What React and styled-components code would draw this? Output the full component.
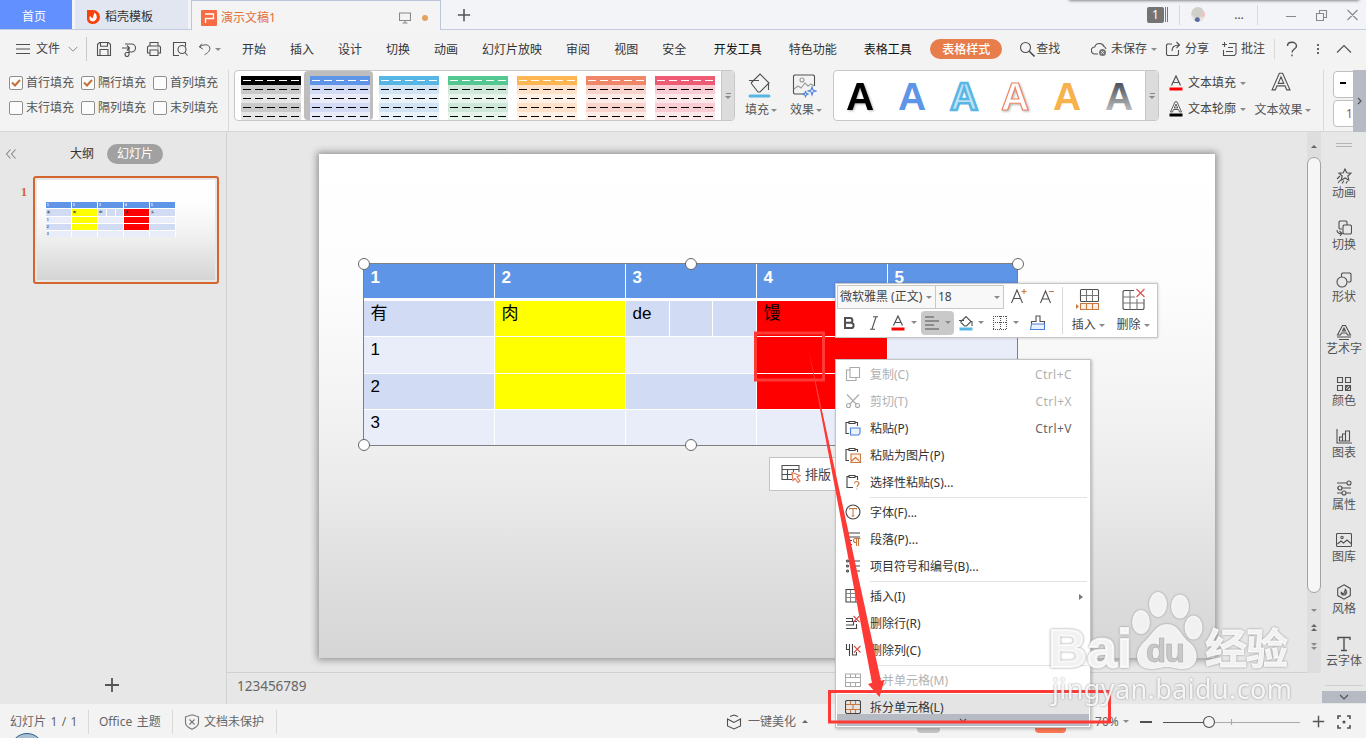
import React from "react";
import styled, { createGlobalStyle, css } from "styled-components";

const GlobalStyle = createGlobalStyle`
  * { box-sizing: border-box; }
  body {
    margin: 0;
    overflow: hidden;
    font-family: "Noto Sans", "Noto Sans CJK SC", sans-serif;
    font-size: 12px;
    line-height: 16px;
    color: #444;
  }
`;

const App_ = styled.div`
  position: relative;
  display: flex;
  flex-direction: column;
  width: 1366px;
  height: 738px;
  overflow: hidden;
  background: #f3f3f3;
  white-space: nowrap;
`;

/* shared parts */

const Svg = styled.svg`
  display: block;
  flex: none;
  fill: none;
  stroke: ${(p) => p.$color || "#505050"};
  stroke-width: ${(p) => p.$line || 1.1};
`;

const Slot = styled.div`
  display: flex;
  flex: none;
  align-items: center;
  justify-content: ${(p) => (p.$start ? "flex-start" : "center")};
  width: ${(p) => p.$w}px;
`;

const Caret = styled.i`
  flex: none;
  width: 0;
  height: 0;
  margin-left: ${(p) => p.$gap ?? 6}px;
  border: 3px solid transparent;
  border-bottom-width: 0;
  border-top-color: #8a8a8a;
  ${(p) =>
    p.$up &&
    css`
      border-bottom: 3px solid #666;
      border-top-width: 0;
    `}
`;

const Rule = styled.span`
  flex: none;
  width: 1px;
  height: ${(p) => p.$h || 24}px;
  background: ${(p) => p.$color || "#d9d9d9"};
`;

const Spacer = styled.div`
  flex: ${(p) => (p.$w ? `0 0 ${p.$w}px` : "1")};
`;

/* window tabs */

const TabBar = styled.div`
  display: flex;
  align-items: stretch;
  flex: none;
  height: 30px;
  background: #f2f4f8;
  border-bottom: 1px solid #c3cbe0;
`;

const HomeTab = styled.div`
  display: flex;
  align-items: center;
  justify-content: center;
  width: 72px;
  padding: 5px 4px 0 0;
  margin-right: 3px;
  color: #fff;
  background: #6390ff;
`;

const TemplateTab = styled.div`
  display: flex;
  align-items: center;
  gap: 5px;
  width: 113px;
  padding: 5px 0 0 12px;
  margin-right: 3px;
  color: #333;
  background: #e1e6f0;
`;

const ActiveTab = styled.div`
  display: flex;
  align-items: center;
  width: 250px;
  height: 30px;
  padding: 4px 0 0 9px;
  color: #e2703a;
  background: #f4f4f4;
  border: 1px solid #bdc5da;
  border-bottom: 0;
`;

const Dot = styled.span`
  width: 6px;
  height: 6px;
  border-radius: 50%;
  background: #e5a062;
  margin: 0 12px 0 11px;
`;

const Badge = styled.span`
  width: 17px;
  height: 16px;
  border-radius: 2px;
  background: #747474;
  color: #fff;
  text-align: center;
`;

const Avatar = styled.span`
  width: 14px;
  height: 15px;
  border-radius: 50%;
  background: radial-gradient(circle at 45% 85%, #5a6da0 0 2px, transparent 3px),
    radial-gradient(circle at 90% 50%, #f3c0c4 0 2px, transparent 3px),
    radial-gradient(circle at 45% 35%, #cfd0c8 0 5px, #ebe2e0 7px);
`;

const TopShadow = styled.div`
  position: absolute;
  top: -7px;
  left: 1070px;
  width: 288px;
  height: 7px;
  background: #999;
  box-shadow: 0 0 3px 1px #888;
`;

/* menu */

const MenuRow = styled.div`
  display: flex;
  align-items: center;
  flex: none;
  height: 37px;
  padding-top: 1px;
`;

const MenuItem = styled.span`
  padding: 2px ${(p) => (p.$wide ? 13.5 : 12)}px 0;
  color: ${(p) => (p.$strong ? "#111" : "#333")};
`;

const MenuPill = styled.span`
  width: 72px;
  height: 20px;
  margin: 0 17px 0 4px;
  border-radius: 10px;
  line-height: 21px;
  text-align: center;
  font-weight: 500;
  color: #fff;
  background: #e77d4b;
`;

/* ribbon */

const Ribbon = styled.div`
  display: flex;
  flex: none;
  height: 65px;
  padding-top: 3px;
  border-bottom: 1px solid #d6d6d6;
`;

const Checks = styled.div`
  display: grid;
  grid-template-columns: repeat(3, 72px);
  grid-template-rows: 25px 26px;
  width: 228px;
  padding-left: 9px;
`;

const Check = styled.label`
  display: flex;
  align-items: center;
  gap: 3px;
  color: #555;
`;

const Box = styled.span`
  width: 14px;
  height: 14px;
  border: 1px solid #8f8f8f;
  border-radius: 2px;
  background: #fbfbfb;
`;

const Gallery = styled.div`
  display: flex;
  flex: none;
  width: ${(p) => p.$w}px;
  height: 51px;
  border: 1px solid #c8c8c8;
  border-radius: 4px;
  background: #fff;
  overflow: hidden;
`;

const GalleryItem = styled.div`
  flex: none;
  width: 69px;
  padding: 5px 3px 0 6px;
  ${(p) =>
    p.$selected &&
    css`
      background: #bdbdbd;
      border-radius: 4px;
    `}
`;

const Stripe = styled.div`
  width: 60px;
  height: 9px;
  background: repeating-linear-gradient(
        to right,
        transparent 0 2px,
        ${(p) => p.$dash} 2px 10px,
        transparent 10px 12px
      )
      0 4px / 100% 1px no-repeat
    ${(p) => p.$bg};
`;

const GalleryMore = styled.div`
  display: flex;
  flex-direction: column;
  align-items: center;
  justify-content: center;
  gap: 2px;
  width: 13px;
  margin-left: auto;
  background: #dcdcdc;
  border-left: 1px solid #c8c8c8;
  &::before {
    content: "";
    width: 5px;
    height: 1px;
    background: #888;
  }
`;

const Art = styled.div`
  display: flex;
  align-items: center;
  justify-content: center;
  width: 52px;
`;

const BigButton = styled.div`
  display: flex;
  flex-direction: column;
  align-items: center;
  width: ${(p) => p.$w}px;
  gap: 4px;
  padding-top: 2px;
  color: #555;
  > svg { margin-left: -3px; }
`;

const BigLabel = styled.span`
  display: flex;
  align-items: center;
  padding-left: 1px;
`;

const SmallStack = styled.div`
  display: grid;
  grid-template-rows: 26px 26px;
  width: 82px;
  padding-left: 10px;
`;

const SmallButton = styled.div`
  display: flex;
  align-items: center;
  gap: 5px;
  color: #444;
`;

const Fields = styled.div`
  display: flex;
  flex-direction: column;
  gap: 2px;
  width: 20px;
  margin-left: 9px;
  padding-top: 1px;
  overflow: hidden;
`;

const Field = styled.div`
  width: 60px;
  height: 27px;
  padding: 5px 0 0 ${(p) => p.$pad}px;
  font-size: 12px;
  color: #9a5c38;
  border: 1px solid #bfbfbf;
  border-radius: 4px;
  background: #fff;
`;

const Expand = styled.div`
  display: flex;
  align-items: center;
  justify-content: center;
  width: 13px;
  height: 62px;
  background: #b5bac3;
`;

/* body */

const Body = styled.div`
  display: flex;
  flex: 1;
  min-height: 0;
  background: #e7e7e7;
`;

const Outline = styled.aside`
  display: flex;
  flex-direction: column;
  width: 227px;
  border-right: 1px solid #d2d2d2;
`;

const OutlineHead = styled.div`
  display: flex;
  align-items: center;
  height: 42px;
  padding: 1px 0 0 6px;
  color: #333;
`;

const OutlinePill = styled.span`
  width: 56px;
  height: 20px;
  margin-left: 13px;
  border-radius: 10px;
  line-height: 20px;
  text-align: center;
  color: #fff;
  background: #a1a1a1;
`;

const ThumbRow = styled.div`
  display: flex;
  flex: 1;
  align-items: flex-start;
  padding: 2px 0 0 20px;
`;

const ThumbNo = styled.b`
  width: 13px;
  padding-top: 8px;
  font: bold 12px/16px "Liberation Serif", serif;
  color: #d2622a;
  text-indent: 1px;
`;

const Thumb = styled.div`
  width: 186px;
  height: 108px;
  padding: 2px;
  border: 2px solid #d2662d;
  border-radius: 3px;
`;

const ThumbPage = styled.div`
  height: 100%;
  padding: 22px 0 0 9px;
  background: linear-gradient(#fff 0, #fdfdfd 25%, #f3f3f3 50%, #ebebeb 65%, #dedede 85%, #d5d5d5);
`;

const MiniTable = styled.div`
  display: grid;
  grid-template-columns: repeat(5, 25px);
  grid-template-rows: 6px 7px 6px 6px 6px;
  gap: 1px;
  width: 130px;
  background: #fff;
  font: bold 3px/4px "Liberation Sans", sans-serif;
`;

const MiniCell = styled.div`
  display: flex;
  gap: 1px;
  padding: 1px 0 0 1px;
  overflow: hidden;
  color: ${(p) => (p.$head ? "#fff" : "#333")};
  background: ${(p) => p.$bg};
`;

const MiniBar = styled.span`
  width: 1px;
  height: 7px;
  margin: -1px 0 0 ${(p) => p.$gap}px;
  background: #fff;
`;

const AddSlide = styled.div`
  height: 39px;
  padding: 12px 0 0 104px;
`;

const Stage = styled.main`
  display: flex;
  flex-direction: column;
  width: 1080px;
`;

const Canvas = styled.div`
  flex: 1;
  padding: 22px 0 0 92px;
  overflow: hidden;
  border-bottom: 1px solid #d0d0d0;
`;

const Slide = styled.div`
  width: 896px;
  height: 504px;
  padding: 110px 0 0 45px;
  background: linear-gradient(#fff 0, #fdfdfd 25%, #f3f3f3 50%, #ebebeb 65%, #dedede 85%, #d5d5d5);
  box-shadow: 0 0 7px 2px rgba(0, 0, 0, 0.36);
`;

const Frame = styled.div`
  position: relative;
  width: 653px;
  box-shadow: 0 0 0 1px #7f7f7f;
  background: #fff;
`;

const Row = styled.div`
  display: grid;
  grid-template-columns: repeat(4, 130px) 129px;
  column-gap: 1px;
  height: ${(p) => p.$h}px;
  margin-bottom: ${(p) => p.$gap ?? 1}px;
`;

const Cell = styled.div`
  display: flex;
  min-width: 0;
  padding-left: 6.5px;
  font: ${(p) => (p.$head ? "bold" : "normal")} 17px/${(p) => (p.$head ? 28 : 26)}px "Liberation Sans", "Noto Sans CJK SC", sans-serif;
  color: ${(p) => (p.$head ? "#fff" : "#000")};
  background: ${(p) => p.$bg};
`;

const SplitCell = styled.div`
  display: grid;
  grid-template-columns: 43px 42px 43px;
  gap: 1px;
`;

const Handle = styled.i`
  position: absolute;
  left: ${(p) => p.$x}px;
  top: ${(p) => p.$y}px;
  width: 12px;
  height: 12px;
  margin: -6.5px 0 0 -6.5px;
  border: 1px solid #666;
  border-radius: 50%;
  background: #fff;
`;

const LayoutButton = styled.div`
  display: flex;
  align-items: center;
  gap: 3px;
  width: 90px;
  height: 34px;
  margin: 12px 0 0 405px;
  padding-left: 11px;
  font-size: 13px;
  border: 1px solid #c3c3c3;
  background: #fff;
`;

const Notes = styled.div`
  height: 31px;
  padding: 5px 0 0 10px;
  font-size: 13.5px;
  color: #666;
`;

const ScrollBar = styled.div`
  display: flex;
  flex-direction: column;
  align-items: center;
  width: 14px;
  height: 541px;
  padding-top: 13px;
  background: #dedede;
`;

const ScrollThumb = styled.div`
  width: 14px;
  height: 436px;
  margin: 9px 0 16px;
  border: 1px solid #a3a3a3;
  border-radius: 7px;
  background: #f6f6f6;
`;

const Side = styled.aside`
  display: flex;
  flex-direction: column;
  align-items: center;
  width: 45px;
  padding: 11px 0 0 1px;
`;

const Grip = styled.div`
  width: 16px;
  height: 4px;
  margin-bottom: 19px;
  border: solid #b5b5b5;
  border-width: 1px 0;
`;

const SideItem = styled.div`
  display: flex;
  flex-direction: column;
  align-items: center;
  gap: 1px;
  height: 52px;
  padding-top: 2px;
  color: #555;
`;

const SideFoot = styled.div`
  display: flex;
  align-items: center;
  justify-content: center;
  width: 44px;
  height: 12px;
  margin: auto 0 1px;
  background: #b5bac3;
`;

const SideRule = styled.div`
  width: 38px;
  height: 1px;
  margin-top: -1px;
  background: #cfcfcf;
`;

/* status bar */

const Status = styled.footer`
  display: flex;
  align-items: center;
  flex: none;
  height: 34px;
  padding: 1px 0 0 10px;
  color: #666;
  background: #f3f3f3;
`;

const StatusText = styled.span`
  flex: none;
  width: ${(p) => p.$w}px;
  word-spacing: 1.3px;
`;

const ViewButton = styled.span`
  width: ${(p) => p.$w}px;
  height: 22px;
  border-radius: 4px;
  background: ${(p) => p.$bg};
`;

const Orb = styled.div`
  position: absolute;
  left: 10px;
  top: 733px;
  width: 34px;
  height: 34px;
  border: 1px solid #2d5f92;
  border-radius: 50%;
  background: #a9bfd2;
`;

/* floating format bar */

const FormatBar = styled.div`
  position: absolute;
  left: 835px;
  top: 283px;
  display: flex;
  width: 323px;
  height: 55px;
  padding: 1px;
  border: 1px solid #c6c6c6;
  background: #fff;
  box-shadow: 0 0 3px rgba(0, 0, 0, 0.2);
`;

const FormatLines = styled.div`
  display: flex;
  flex-direction: column;
  width: 225px;
`;

const FormatLine = styled.div`
  display: flex;
  align-items: center;
  height: ${(p) => p.$h}px;
`;

const Combo = styled.div`
  display: flex;
  align-items: center;
  justify-content: space-between;
  width: ${(p) => p.$w}px;
  height: 24px;
  padding: 0 3px 0 2px;
  margin-right: -1px;
  border: 1px solid #c8c8c8;
  background: #f8f8f8;
`;

const AlignButton = styled.div`
  display: flex;
  align-items: center;
  width: 33px;
  height: 24px;
  padding-left: 4px;
  border-radius: 4px;
  background: #c9c9c9;
`;

const FormatBig = styled.div`
  display: flex;
  flex-direction: column;
  align-items: center;
  width: 45px;
  padding-top: 3px;
  gap: 6px;
`;

const FormatLabel = styled.span`
  display: flex;
  align-items: center;
  margin-left: -1px;
`;

/* context menu */

const ContextMenu = styled.div`
  position: absolute;
  left: 835px;
  top: 359px;
  width: 256px;
  height: 369px;
  padding: 1px;
  border: 1px solid #c4c4c4;
  background: #fff;
  box-shadow: 1px 1px 3px rgba(0, 0, 0, 0.25);
`;

const ContextItem = styled.div`
  display: flex;
  align-items: center;
  gap: 9px;
  height: 27px;
  padding: 1px 17px 0 8px;
  color: ${(p) => (p.$off ? "#b1b1b1" : "#333")};
  background: ${(p) => (p.$active ? "#e4e4e4" : "transparent")};
  > svg { margin-top: -2px; }
`;

const Shortcut = styled.span`
  margin-left: auto;
  letter-spacing: 0.45px;
  color: ${(p) => (p.$off ? "#b1b1b1" : "#666")};
`;

const SubArrow = styled.i`
  margin: 0 -11px 0 auto;
  border: 3px solid transparent;
  border-left: 4px solid #777;
  border-right-width: 0;
`;

const ContextRule = styled.div`
  height: 1px;
  margin: 1px 2px 1px 33px;
  background: #e3e3e3;
`;

const ContextMore = styled.div`
  position: relative;
  display: flex;
  justify-content: center;
  height: 12px;
  margin-top: -7px;
  background: #b5bac3;
`;

const Overlay = styled.svg`
  position: absolute;
  left: 0;
  top: 0;
  pointer-events: none;
`;

const Mark = styled(Overlay)`
  filter: drop-shadow(0 0 1px #888);
`;

/* icons, keyed by name; each is drawn on a 16px box */
const icons = {
  burger: <path d="M1 3.5h14M1 8h14M1 12.5h14" />,
  save: <path d="M1.5 3.5l2-2h9l2 2v11h-13zM4.5 1.8v3.4h7V2M4 14.5v-6h8v6" />,
  export: <path d="M4 3h6.500a4 4 0 0 1 0 8H8M1 7h7.500M6 4.500L8.500 7 6 9.500M8 8v5.500a2 2 0 1 1-2-2h2" />,
  print: <path d="M4 5V1.500h8V5M4 12H1.500V6l1-1h11l1 1v6H12M4 9h8v5.500H4zM11.500 7h1" />,
  undo: <path d="M4.500 2L1.500 5.500 5.500 8M1.800 5.500C6 2.500 13 2 13.500 7c.3 3.500-3 6-6 7.500" />,
  search: <g><circle cx="6.500" cy="6.500" r="5" /><path d="M10 10l5.500 5.500" strokeWidth="1.600" /></g>,
  cloud: <g><path d="M7 13H4a3.500 3.500 0 0 1-.3-7A5 5 0 0 1 13 5.500a3.500 3.500 0 0 1 2 2.500" /><circle cx="11.500" cy="11.500" r="3.500" fill="#777" stroke="none" /><path d="M10.300 10.300l2.400 2.400M12.700 10.300l-2.400 2.400" stroke="#fff" strokeWidth=".9" /></g>,
  share: <path d="M7 3H2.500l-1 1v9.500l1 1h10l1-1V9M7 10c0-4 2-6 7.500-6M11.500 1l3 3-3 3" />,
  comment: <path d="M8 2.500h7v10l-1.500 2h-11V9M1 3.500h5M3.500 1v5M7 6.500h5M5 10.500h7" />,
  animate: <path d="M9 1l1.700 3.800 4.300.4-3.200 2.800 1 4.200L9 10l-3.800 2.200 1-4.200L3 5.200l4.300-.4zM4 8l-3 3M4.500 12L2 15M8 12.500L6 15.500M11.500 13L10 15.500" />,
  swap: <path d="M11 5V2l-1-1H4L3 2v6l1 1h2M7 6l1-1h6.500l1 1v7l-1 1H8l-1-1zM1 10c0 3 2 4 5 3.500M3.500 11l2.500 2.500L4 16" />,
  shapes: <g><path d="M5.500 5V2l1-1H14l1 1v7l-1 1h-2.500" /><circle cx="6" cy="10" r="5" /></g>,
  wordart: <g><path d="M1.500 11L6.500 1.500h3l5 9.500h-3l-1-2h-5l-1 2zM6.500 7L8 4l1.500 3z" /><path d="M1 13h14M3 15.500h10" /></g>,
  palette: <path d="M1.500 1.500h5v5h-5zM9.500 1.500h5v5h-5zM1.500 9.500h5v5h-5zM9.500 9.500h5v5h-5zM10 14.500l4.500-4.500M9.500 12l2.500-2.500" />,
  chart: <path d="M1 1v14h15M3.500 13V9h3v4zM6.500 13V6h3v7M9.500 13V3h4v10zM3.500 13h10" />,
  sliders: <g><path d="M1 3h10M5.500 8H15M1 8h1M1 13h5M10 13h5" /><circle cx="13" cy="3" r="2" /><circle cx="4" cy="8" r="2" /><circle cx="8" cy="13" r="2" /></g>,
  image: <g><rect x=".5" y="1.500" width="15" height="13" rx="1" /><circle cx="6" cy="5.500" r="1.200" /><path d="M1.500 12L5 9l2.500 2L11 8l4 3.500" /></g>,
  style: <g><path d="M8 .8l6.300 3.600v7.200L8 15.200l-6.300-3.600V4.400z" /><path d="M8 12C4 11.500 4 8.500 5 7l2.300 2L9 4c3 2 3.500 7-1 8zM7.500 11.500L10 7" fill="#4c4c4c" stroke="#e7e7e7" strokeWidth=".5" /></g>,
  type: <path d="M2 4V1.500h12V4M8 1.500v13M5 14.500h6" strokeWidth="1.400" />,
  shield: <path d="M8 .8l6.500 2v6C14.500 12 11 14 8 15.300 5 14 1.500 12 1.500 8.800v-6zM5.500 5.500l5 5M10.500 5.500l-5 5" />,
  cube: <path d="M4 2.500L8 1l4 1.500M1.500 5v7L8 15l6.500-3V5L8 8.500zM1.500 5L8 8.500" />,
  fullscreen: <g><path d="M2 5V2h3M11 2h3v3M14 11v3h-3M5 14H2v-3" strokeWidth="1.600" /><circle cx="8" cy="8" r="1" fill="#444" /></g>,
  copy: <path d="M5 1.500h9.500v10H5zM5 4H1.500v10.500H11v-3" />,
  cut: <g><path d="M2 1.500l9.500 10M14 1.500L4.500 11.500" /><circle cx="3.500" cy="12.500" r="2" /><circle cx="12.500" cy="12.500" r="2" /></g>,
  paste: <g><path d="M4 13.500H1v-11h3M10 2.500h2.500V6M4 1.500h6v2H4z" /><path d="M5.500 8h9.500v5l-1.500 2h-8z" stroke="#4a80d8" fill="#eaf2fd" /></g>,
  pasteImage: <g><path d="M4 13.500H1v-11h3M10 2.500h2.500V5M4 1.500h6v2H4z" /><path d="M6 7h9.500v8.500H6zM6 14.500l4.500-4 4.500 4" stroke="#c9783f" fill="#fdf0e6" /></g>,
  pasteSpecial: <g><path d="M8 13.500H2v-11h2M10 2.500h2.500V6M4 1.500h6v2H4z" /><path d="M9.500 9.500c0-3 4.500-2.500 4.500 0 0 1.500-2 1.500-2 3.500M12 14.500v1" stroke="#c9783f" /></g>,
  font: <g><circle cx="8" cy="8" r="7" /><path d="M4.500 5.500V4.500h7v1M8 4.500v7.500M6.500 12h3" stroke="#c9783f" /></g>,
  paragraph: <g><path d="M3 2h12M3 6h12M3 9.500h4M1 13.500h6" /><path d="M15.500 7.500h-5a2 2 0 0 0 0 4h1M11.500 7.500V15M13.500 7.500V15" stroke="#c9783f" /></g>,
  bullets: <g><path d="M6 3h9M6 8h9M6 13h9" /><circle cx="2.500" cy="3" r="1" /><circle cx="2.500" cy="8" r="1" /><circle cx="2.500" cy="13" r="1" /></g>,
  grid: <g><path d="M1.500 5.500h13M1.500 9.500h13M5.500 1.500V14M10.500 1.500V14" stroke="#888" /><path d="M1 1.500h14v12.500H1z" /></g>,
  delRow: <g><path d="M1 3.500h6.500v3H1M1 10h7.500V6.500H12M1 13.500h10.500V9" /><path d="M8.500 1l6 6M14.500 1l-6 6" stroke="#d94f4f" /></g>,
  delCol: <g><path d="M1.500 2v5.500H4.500V2M4.500 7.500V14M7.500 2v11h4V10" /><path d="M9 4l6.500 6.500M15.500 4L9 10.500" stroke="#d94f4f" /></g>,
  merge: <path d="M.5 2h15v12.500H.5zM.5 5.500h15M.5 10.500h15M5.500 2v3.500M10.500 2v3.500M5.500 10.500v4M10.500 10.500v4" />,
  split: <g><path d="M5.500 2v3.500M10.500 2v3.500M1 5.500h14M1 10.500h14M8 5.500v5M5.500 10.500v4M10.500 10.500v4" stroke="#c9783f" /><path d="M.5 5V2.500l1-1h13l1 1V5M.5 11v2.500l1 1h13l1-1V11M.5 5v6M15.500 5v6" /></g>,
  chevron: <path d="M3 5.500L8 10.500l5-5" />,
  up: <path d="M1 11.500l7-7 7 7" />,
  plus: <path d="M8 1v14M1 8h14" strokeWidth="1.800" />,
};

const Icon = ({ name, size = 16, color, line }) => (
  <Svg viewBox="0 0 16 16" width={size} height={size} $color={color} $line={line}>
    {icons[name]}
  </Svg>
);

const Preview = () => (
  <Svg width="16" height="16" viewBox="0 0 16 16">
    <path d="M7 14.500H1.500v-13h12v4" />
    <circle cx="10" cy="8.500" r="4" />
    <path d="M13 11.500l2.500 3" />
  </Svg>
);

const Bucket = () => (
  <Svg width="26" height="26" viewBox="0 0 26 26">
    <path d="M3 8.500h10M5 11L14 2l9 9-9 9h-2l-7-9M22.500 10v8" />
    <path d="M4 24h19" stroke="#58b6e4" strokeWidth="3" strokeLinecap="round" />
  </Svg>
);

const SmallBucket = () => (
  <Svg width="16" height="16" viewBox="0 0 16 16">
    <path d="M1 5.500h5M2.500 7L8 1.500 13 6.500l-4.500 4.500h-2L2.500 7M14 6v5" />
    <path d="M1.500 14h13" stroke="#58b6e4" strokeWidth="3" />
  </Svg>
);

const EffectIcon = () => (
  <Svg width="26" height="26" viewBox="0 0 26 26">
    <path d="M13 22H3.500l-1-1V4l1-1h19l1 1v10" />
    <g stroke="#999">
      <circle cx="11" cy="8" r="2" />
      <path d="M3 17l4-3 3 2 4-5 3 3 3-2 3 2" />
    </g>
    <path d="M21 15l1 3 3 1-3 1-1 3-1-3-3-1 3-1zM14.500 19.500l.8 1.800 1.800.8-1.800.8-.8 1.800-.8-1.800-1.800-.8 1.800-.8z" stroke="#4f83dc" />
  </Svg>
);

const LetterA = ({ bar, outline, size = 14, line = 0.9 }) => (
  <Svg width={size} height={size + 2} viewBox="0 0 14 16" $line={outline ? line : 1.2}>
    {outline ? (
      <path d="M1.500 11L6 .8h2L12.500 11h-2L9.500 8.500h-5L3.500 11zM5.300 7L7 3l1.700 4z" />
    ) : (
      <path d="M2.500 10.500L7 1l4.500 9.500M4 7.500h6" />
    )}
    {bar && <path d="M.5 14h13" stroke={bar} strokeWidth="3" />}
  </Svg>
);

const menuItems = ["开始", "插入", "设计", "切换", "动画", "幻灯片放映", "审阅", "视图", "安全"];

const tableStyles = [
  ["#000", "#cbcaca", "#e7e6e6"],
  ["#5f95e6", "#d3dbf5", "#eaedf9"],
  ["#58b6e4", "#d3e4f4", "#eaf3fa"],
  ["#55c892", "#cfe8da", "#e7f4ec"],
  ["#fdb651", "#fee2ca", "#fff1e6"],
  ["#f08769", "#f9d5cd", "#fcebe7"],
  ["#ed5c74", "#f9cdd3", "#fce8ea"],
];

const artStyles = [
  { fill: "#000", shadow: true },
  { fill: "#5f95e6" },
  { fill: "#bfe3f6", stroke: "#58b6e4", width: 2.5 },
  { fill: "#fff", stroke: "#f08769", width: 1.2, shadow: true },
  { fill: "#f7b14d" },
  { fill: "url(#steel)" },
];

const DARK = "#d2dbf4";
const LIGHT = "#e9edf9";
const BLUE = "#5f95e6";
const YELLOW = "#ffff00";
const RED = "#ff0000";

const tableRows = [
  { h: 34, gap: 3, cells: [["1", BLUE], ["2", BLUE], ["3", BLUE], ["4", BLUE], ["5", BLUE]] },
  { h: 35, cells: [["有", DARK], ["肉", YELLOW], ["de", DARK, true], ["馒", RED], ["头", DARK]] },
  { h: 36, cells: [["1", LIGHT], ["", YELLOW], ["", LIGHT], ["", RED], ["", LIGHT]] },
  { h: 35, cells: [["2", DARK], ["", YELLOW], ["", DARK], ["", RED], ["", DARK]] },
  { h: 35, gap: 0, cells: [["3", LIGHT], ["", LIGHT], ["", LIGHT], ["", LIGHT], ["", LIGHT]] },
];

const sideItems = [
  ["animate", "动画"],
  ["swap", "切换"],
  ["shapes", "形状"],
  ["wordart", "艺术字"],
  ["palette", "颜色"],
  ["chart", "图表"],
  ["sliders", "属性"],
  ["image", "图库"],
  ["style", "风格"],
  ["type", "云字体"],
];

const contextItems = [
  { icon: "copy", text: "复制(C)", keys: "Ctrl+C", off: true },
  { icon: "cut", text: "剪切(T)", keys: "Ctrl+X", off: true },
  { icon: "paste", text: "粘贴(P)", keys: "Ctrl+V" },
  { icon: "pasteImage", text: "粘贴为图片(P)" },
  { icon: "pasteSpecial", text: "选择性粘贴(S)..." },
  null,
  { icon: "font", text: "字体(F)..." },
  { icon: "paragraph", text: "段落(P)..." },
  { icon: "bullets", text: "项目符号和编号(B)..." },
  null,
  { icon: "grid", text: "插入(I)", sub: true },
  { icon: "delRow", text: "删除行(R)" },
  { icon: "delCol", text: "删除列(C)" },
  null,
  { icon: "merge", text: "合并单元格(M)", off: true },
  { icon: "split", text: "拆分单元格(L)", active: true },
];

const handles = [
  [0, 0],
  [327, 0],
  [654, 0],
  [0, 181.5],
  [327, 181.5],
];

const WindowTabs = () => (
  <TabBar>
    <HomeTab>首页</HomeTab>
    <TemplateTab>
      <Svg width="13" height="16" viewBox="0 0 13 16" $color="none">
        <path d="M0 1h6a7 7 0 0 1 0 14H5a5 5 0 0 1-5-5z" fill="#f9410b" />
        <path d="M6 12.500C2 12 2 9 3 7l2.500 2.500L7.500 3.500C11 6.500 10.500 11.500 6 12.500z" fill="#fff" />
      </Svg>
      稻壳模板
    </TemplateTab>
    <ActiveTab>
      <Svg width="16" height="16" viewBox="0 0 16 16" $color="#fff" $line={1.3}>
        <rect width="16" height="16" rx="1" fill="#f76c43" stroke="none" />
        <path d="M4 4h8.500v4.500H4.500V13" />
      </Svg>
      <Spacer $w={4} />
      演示文稿1
      <Spacer />
      <Svg width="12" height="12" viewBox="0 0 12 12" $color="#888">
        <path d="M.5 1h11v7.500H.5zM6 8.500v2.500M3.500 11h5" />
      </Svg>
      <Dot />
    </ActiveTab>
    <Slot $w={46}>
      <Icon name="plus" size={14} color="#555" />
    </Slot>
    <Spacer />
    <Slot $w={219} $start>
      <Badge>1</Badge>
      <Spacer $w={1} />
      <Rule $h={15} $color="#777" />
      <Spacer $w={1} />
      <Rule $h={15} $color="#777" />
      <Spacer $w={11} />
      <Rule $h={20} />
      <Spacer $w={11} />
      <Avatar />
      <Spacer $w={28} />
      <Slot $w={12}>…</Slot>
      <Spacer $w={12} />
      <Rule $h={20} />
      <Spacer $w={28} />
      <Svg width="72" height="14" viewBox="0 0 72 14" $color="#888">
        <path d="M0 8.500h10M30.500 5.500h7v7h-7zM33.500 5V2.500h7v7h-2.500M61.500 2l10 10M71.500 2l-10 10" />
      </Svg>
    </Slot>
  </TabBar>
);

const Menu = () => (
  <MenuRow>
    <Spacer $w={15} />
    <Icon name="burger" />
    <Spacer $w={5} />
    文件
    <Spacer $w={6} />
    <Icon name="chevron" size={14} color="#888" />
    <Spacer $w={6} />
    <Rule $color="#c9c9c9" />
    <Slot $w={34}><Icon name="save" /></Slot>
    <Slot $w={16}><Icon name="export" /></Slot>
    <Slot $w={34}><Icon name="print" /></Slot>
    <Slot $w={17}><Preview /></Slot>
    <Slot $w={33}><Icon name="undo" size={14} /></Slot>
    <Caret $gap={-6} />
    <Spacer $w={9} />
    {menuItems.map((t) => (
      <MenuItem key={t}>{t}</MenuItem>
    ))}
    <Spacer $w={2} />
    <MenuItem $wide $strong>开发工具</MenuItem>
    <MenuItem $wide>特色功能</MenuItem>
    <MenuItem $wide $strong>表格工具</MenuItem>
    <Spacer $w={1} />
    <MenuPill>表格样式</MenuPill>
    <Icon name="search" />
    <Spacer $w={1} />
    查找
    <Spacer />
    <Slot $w={275} $start>
      <Icon name="cloud" />
      <Spacer $w={4} />
      未保存
      <Caret $gap={4} />
      <Spacer $w={8} />
      <Icon name="share" />
      <Spacer $w={4} />
      分享
      <Spacer $w={12} />
      <Icon name="comment" />
      <Spacer $w={4} />
      批注
      <Spacer $w={9} />
      <Rule $h={20} />
      <Slot $w={33}>
        <Svg width="12" height="16" viewBox="0 0 12 16" $line={1.4}>
          <path d="M1.500 5c0-5 9-5 9 0 0 3-4.500 3-4.500 6.500M6 13.500v1.800" />
        </Svg>
      </Slot>
      <Slot $w={20}>
        <Svg width="4" height="14" viewBox="0 0 4 14" $color="none">
          <path d="M1 2h2v2H1zM1 6h2v2H1zM1 10h2v2H1z" fill="#666" />
        </Svg>
      </Slot>
      <Slot $w={32}><Icon name="up" /></Slot>
    </Slot>
  </MenuRow>
);

const RibbonBar = () => (
  <Ribbon>
    <Checks>
      {["首行填充", "隔行填充", "首列填充", "末行填充", "隔列填充", "末列填充"].map((t, i) => (
        <Check key={t}>
          <Box>
            {i < 2 && (
              <Svg width="12" height="12" viewBox="0 0 12 12" $color="#c0713c" $line={2}>
                <path d="M2 5.500l3 3L10 3" />
              </Svg>
            )}
          </Box>
          {t}
        </Check>
      ))}
    </Checks>
    <Rule $h={62} />
    <Spacer $w={5} />
    <Gallery $w={501}>
      {tableStyles.map(([head, dark, light], i) => (
        <GalleryItem key={head} $selected={i === 1}>
          <Stripe $bg={head} $dash="#fff" />
          <Stripe $bg={dark} $dash="#000" />
          <Stripe $bg={light} $dash="#000" />
          <Stripe $bg={dark} $dash="#000" />
          <Stripe $bg={light} $dash="#000" />
        </GalleryItem>
      ))}
      <GalleryMore><Caret $gap={0} /></GalleryMore>
    </Gallery>
    <Spacer $w={3} />
    <BigButton $w={45}>
      <Bucket />
      <BigLabel>填充<Caret $gap={2} /></BigLabel>
    </BigButton>
    <BigButton $w={45}>
      <EffectIcon />
      <BigLabel>效果<Caret $gap={2} /></BigLabel>
    </BigButton>
    <Spacer $w={5} />
    <Gallery $w={326}>
      {artStyles.map((a, i) => (
        <Art key={i}>
          <svg width="40" height="42">
            <defs>
              <linearGradient id="steel" x1="0" y1="0" x2="0" y2="1">
                <stop offset=".2" stopColor="#4f5358" />
                <stop offset=".9" stopColor="#c4c6c9" />
              </linearGradient>
            </defs>
            <text
              x="20"
              y="34.500"
              textAnchor="middle"
              fontFamily="Liberation Sans"
              fontWeight="bold"
              fontSize="39"
              fill={a.fill}
              stroke={a.stroke || "none"}
              strokeWidth={a.width}
              filter={a.shadow ? "drop-shadow(1px 1px 1px rgba(0,0,0,.3))" : undefined}
            >
              A
            </text>
          </svg>
        </Art>
      ))}
      <GalleryMore><Caret $gap={0} /></GalleryMore>
    </Gallery>
    <SmallStack>
      <SmallButton><LetterA bar="#f00" />文本填充<Caret $gap={-1} /></SmallButton>
      <SmallButton><LetterA bar="#000" outline />文本轮廓<Caret $gap={-1} /></SmallButton>
    </SmallStack>
    <BigButton $w={82}>
      <LetterA outline size={24} line={0.7} />
      <BigLabel>文本效果<Caret $gap={2} /></BigLabel>
    </BigButton>
    <Rule $h={62} />
    <Fields>
      <Field $pad={5}>
        <Svg width="8" height="14" viewBox="0 0 8 14" $color="#000" $line={2}><path d="M1 6h6" /></Svg>
      </Field>
      <Field $pad={12}>1</Field>
    </Fields>
    <Expand>
      <Svg width="6" height="8" viewBox="0 0 6 8"><path d="M1 1l3 3-3 3" /></Svg>
    </Expand>
  </Ribbon>
);

const OutlinePane = () => (
  <Outline>
    <OutlineHead>
      <Svg width="10" height="10" viewBox="0 0 10 10" $color="#888"><path d="M4.500.500L.500 5l4 4.500M9.500.500L5.500 5l4 4.500" /></Svg>
      <Spacer $w={54} />
      大纲
      <OutlinePill>幻灯片</OutlinePill>
    </OutlineHead>
    <ThumbRow>
      <ThumbNo>1</ThumbNo>
      <Thumb>
        <ThumbPage>
          <MiniTable>
            {tableRows.map((r, y) =>
              r.cells.map(([text, bg, split], x) => (
                <MiniCell key={`${y}-${x}`} $bg={bg} $head={y === 0}>
                  {text}
                  {split && <MiniBar $gap={2} />}
                  {split && <MiniBar $gap={7} />}
                </MiniCell>
              ))
            )}
          </MiniTable>
        </ThumbPage>
      </Thumb>
    </ThumbRow>
    <AddSlide><Icon name="plus" color="#555" line={1.8} /></AddSlide>
  </Outline>
);

const SlideTable = () => (
  <Frame>
    {tableRows.map((r, y) => (
      <Row key={y} $h={r.h} $gap={r.gap}>
        {r.cells.map(([text, bg, split], x) =>
          split ? (
            <SplitCell key={x}>
              <Cell $bg={bg}>{text}</Cell>
              <Cell $bg={bg} />
              <Cell $bg={bg} />
            </SplitCell>
          ) : (
            <Cell key={x} $bg={bg} $head={y === 0}>{text}</Cell>
          )
        )}
      </Row>
    ))}
    {handles.map(([x, y]) => (
      <Handle key={`${x}-${y}`} $x={x} $y={y} />
    ))}
  </Frame>
);

const FloatingFormat = () => (
  <FormatBar>
    <FormatLines>
      <FormatLine $h={26}>
        <Combo $w={99}>微软雅黑 (正文)<Caret $gap={0} /></Combo>
        <Combo $w={69}><span>18</span><Caret $gap={0} /></Combo>
        <Slot $w={32}>
          <Svg width="18" height="18" viewBox="0 0 18 18"><path d="M1.500 15L7 2l5.500 13M3.500 10.500h7" /><path d="M11.500 3.500h5M14 1v5" stroke="#c9783f" /></Svg>
        </Slot>
        <Slot $w={24}>
          <Svg width="16" height="18" viewBox="0 0 16 18"><path d="M1.500 15L6.500 3l5 12M3.500 11h6" /><path d="M10 3.500h5" stroke="#c9783f" /></Svg>
        </Slot>
      </FormatLine>
      <FormatLine $h={28}>
        <Slot $w={24}>
          <Svg width="12" height="14" viewBox="0 0 12 14" $line={2}><path d="M2 2h5a2.300 2.300 0 0 1 0 4.800H2zM2 6.800h6a2.500 2.500 0 0 1 0 5.200H2z" /></Svg>
        </Slot>
        <Slot $w={25}>
          <Svg width="10" height="14" viewBox="0 0 10 14"><path d="M4 .8h5M1 13.200h5M7 1L3 13" /></Svg>
        </Slot>
        <Slot $w={35}><LetterA bar="#f00" /><Caret /></Slot>
        <AlignButton>
          <Svg width="14" height="14" viewBox="0 0 14 14"><path d="M0 1h9M0 5h14M0 9h9M0 13h14" /></Svg>
          <Caret />
        </AlignButton>
        <Slot $w={34}><SmallBucket /><Caret $gap={4} /></Slot>
        <Slot $w={35}>
          <Svg width="14" height="14" viewBox="0 0 14 14">
            <path d="M.5 0v14M13.500 0v14M7.500 0v14M0 .5h14M0 13.500h14M0 6.500h14" strokeDasharray="1 1" />
          </Svg>
          <Caret />
        </Slot>
        <Slot $w={30}>
          <Svg width="16" height="16" viewBox="0 0 16 16"><path d="M1.500 9V6.500H6V1h4v5.500h4.500V9" /><path d="M1.500 9h13v5.500H.5z" stroke="#4a80d8" fill="#eaf2fd" /></Svg>
        </Slot>
      </FormatLine>
    </FormatLines>
    <Slot $w={2}><Rule $h={47} /></Slot>
    <Spacer $w={3} />
    <FormatBig>
      <Svg width="25" height="23" viewBox="0 0 25 23">
        <rect x="4.500" y="1.500" width="18" height="12" rx="1" />
        <path d="M4.500 7.500h18M10.500 1.500v12M16.500 1.500v12" stroke="#777" />
        <path d="M4.500 15.500h18v6h-18zM10.500 15.500v6M16.500 15.500v6" stroke="#c9783f" fill="#fdf0e6" />
        <path d="M0 16l3 2.500L0 21z" fill="#c9783f" stroke="none" />
      </Svg>
      <FormatLabel>插入<Caret $gap={3} /></FormatLabel>
    </FormatBig>
    <FormatBig>
      <Svg width="25" height="23" viewBox="0 0 25 23">
        <path d="M13 2.500H3l-1 1v17l1 1h19l1-1V11" />
        <path d="M2 9h12M2 15h21M9 2.500v19M16 11v10.500" stroke="#777" />
        <path d="M15.500 1l8 8M23.500 1l-8 8" stroke="#d94f4f" />
      </Svg>
      <FormatLabel>删除<Caret $gap={3} /></FormatLabel>
    </FormatBig>
  </FormatBar>
);

const CellMenu = () => (
  <ContextMenu>
    {contextItems.map((it, i) =>
      it ? (
        <ContextItem key={it.text} $off={it.off} $active={it.active}>
          <Icon name={it.icon} color={it.off ? "#aaa" : "#444"} />
          {it.text}
          {it.keys && <Shortcut $off={it.off}>{it.keys}</Shortcut>}
          {it.sub && <SubArrow />}
        </ContextItem>
      ) : (
        <ContextRule key={i} />
      )
    )}
    <ContextMore>
      <Svg width="8" height="12" viewBox="0 0 8 12"><path d="M1 5l3 3 3-3" /></Svg>
    </ContextMore>
  </ContextMenu>
);

const Annotations = () => (
  <Overlay width="1366" height="738">
    <g fill="none" stroke="#fd3a36" strokeWidth="3">
      <rect x="755.500" y="333" width="68" height="47" />
      <rect x="829.500" y="691.500" width="280" height="30.500" />
    </g>
    <path d="M809 351l65.500 331-6.500 2 11.500 13 5-17-5 1z" fill="#fd3a36" />
    <path d="M809 351l72 330-9 2z" fill="#fd3a36" />
  </Overlay>
);

const Watermark = () => (
  <Mark width="1366" height="738">
    <g fill="#fff" fillOpacity=".88" fontFamily="Liberation Sans" fontWeight="bold">
      <text x="1048" y="667" fontSize="54" textLength="84" stroke="#fff" strokeOpacity=".8" strokeWidth="2">Bai</text>
      <ellipse cx="1141" cy="622" rx="9" ry="12" />
      <ellipse cx="1158" cy="604.500" rx="9" ry="12.500" />
      <ellipse cx="1180" cy="606.500" rx="9" ry="12" />
      <ellipse cx="1193.500" cy="627.500" rx="9" ry="12" />
      <path d="M1167 624c12 0 14 12 22 18 12 9 10 27-6 27-8 0-10-2-16-2s-9 2-16 2c-16 0-18-17-7-27 8-7 12-18 23-18z" />
      <text x="1146" y="662" fontSize="33" textLength="39" fill="#c8c8c8" fillOpacity="1" stroke="#aaa" strokeWidth=".6">du</text>
      <text x="1205" y="664" fontSize="42" textLength="83" fontFamily="Noto Sans CJK SC" stroke="#fff" strokeOpacity=".8">经验</text>
      <text x="1052" y="699" fontSize="27" fontWeight="normal" fontFamily="Noto Sans" textLength="240">jingyan.baidu.com</text>
    </g>
  </Mark>
);

const StatusBar = () => (
  <Status>
    <StatusText $w={78}>幻灯片 1 / 1</StatusText>
    <Rule />
    <Spacer $w={10} />
    <StatusText $w={73}>Office 主题</StatusText>
    <Rule />
    <Spacer $w={11} />
    <Icon name="shield" color="#777" />
    <Spacer $w={4} />
    文档未保护
    <Spacer $w={12} />
    <Rule />
    <Spacer />
    <Slot $w={640} $start>
      <Icon name="cube" />
      <Spacer $w={6} />
      一键美化
      <Caret $up />
      <Spacer $w={109} />
      <ViewButton $w={23} $bg="#c5c5c5" />
      <Spacer $w={95} />
      <ViewButton $w={31} $bg="#fb7853" />
      <Spacer $w={29} />
      70%
      <Caret $gap={4} />
      <Spacer $w={11} />
      <Svg width="160" height="14" viewBox="0 0 160 14">
        <path d="M0 7h12" strokeWidth="2" />
        <path d="M23 7.500h46" />
        <path d="M69 7.500h92M91.500 4v6" stroke="#aaa" />
        <circle cx="69" cy="7" r="5.500" fill="#f5f5f5" />
      </Svg>
      <Spacer $w={12} />
      <Icon name="plus" size={13} color="#555" />
      <Spacer $w={11} />
      <Icon name="fullscreen" />
    </Slot>
  </Status>
);

const App = () => {
  return (
    <App_>
      <GlobalStyle />
      <WindowTabs />
      <Menu />
      <RibbonBar />
      <Body>
        <OutlinePane />
        <Stage>
          <Canvas>
            <Slide>
              <SlideTable />
              <LayoutButton>
                <Svg width="21" height="20" viewBox="0 0 21 20">
                  <path d="M1 1.500h17v4H1zM1 5.500v10h10M1 10.500h10M6.500 5.500v10M12.500 5.500V8M18 5.500V8" />
                  <path d="M11 8.500l8 3-3 1.500 3 4-2 1.500-3-4-2 2z" stroke="#e2714c" fill="#fff" />
                </Svg>
                排版
              </LayoutButton>
            </Slide>
          </Canvas>
          <Notes>123456789</Notes>
        </Stage>
        <ScrollBar>
          <Caret $up $gap={0} />
          <ScrollThumb />
          <Caret $gap={0} />
          <Spacer $w={12} />
          <Caret $up $gap={0} />
          <Spacer $w={1} />
          <Caret $up $gap={0} />
          <Spacer $w={12} />
          <Caret $gap={0} />
          <Spacer $w={1} />
          <Caret $gap={0} />
        </ScrollBar>
        <Side>
          <Grip />
          {sideItems.map(([icon, text]) => (
            <SideItem key={text}>
              <Icon name={icon} />
              {text}
            </SideItem>
          ))}
          <SideRule />
          <SideFoot>
            <Svg width="10" height="6" viewBox="0 0 10 6"><path d="M1 1l4 4 4-4" /></Svg>
          </SideFoot>
        </Side>
      </Body>
      <StatusBar />
      <Orb />
      <TopShadow />
      <FloatingFormat />
      <CellMenu />
      <Annotations />
      <Watermark />
    </App_>
  );
};

export default App;
